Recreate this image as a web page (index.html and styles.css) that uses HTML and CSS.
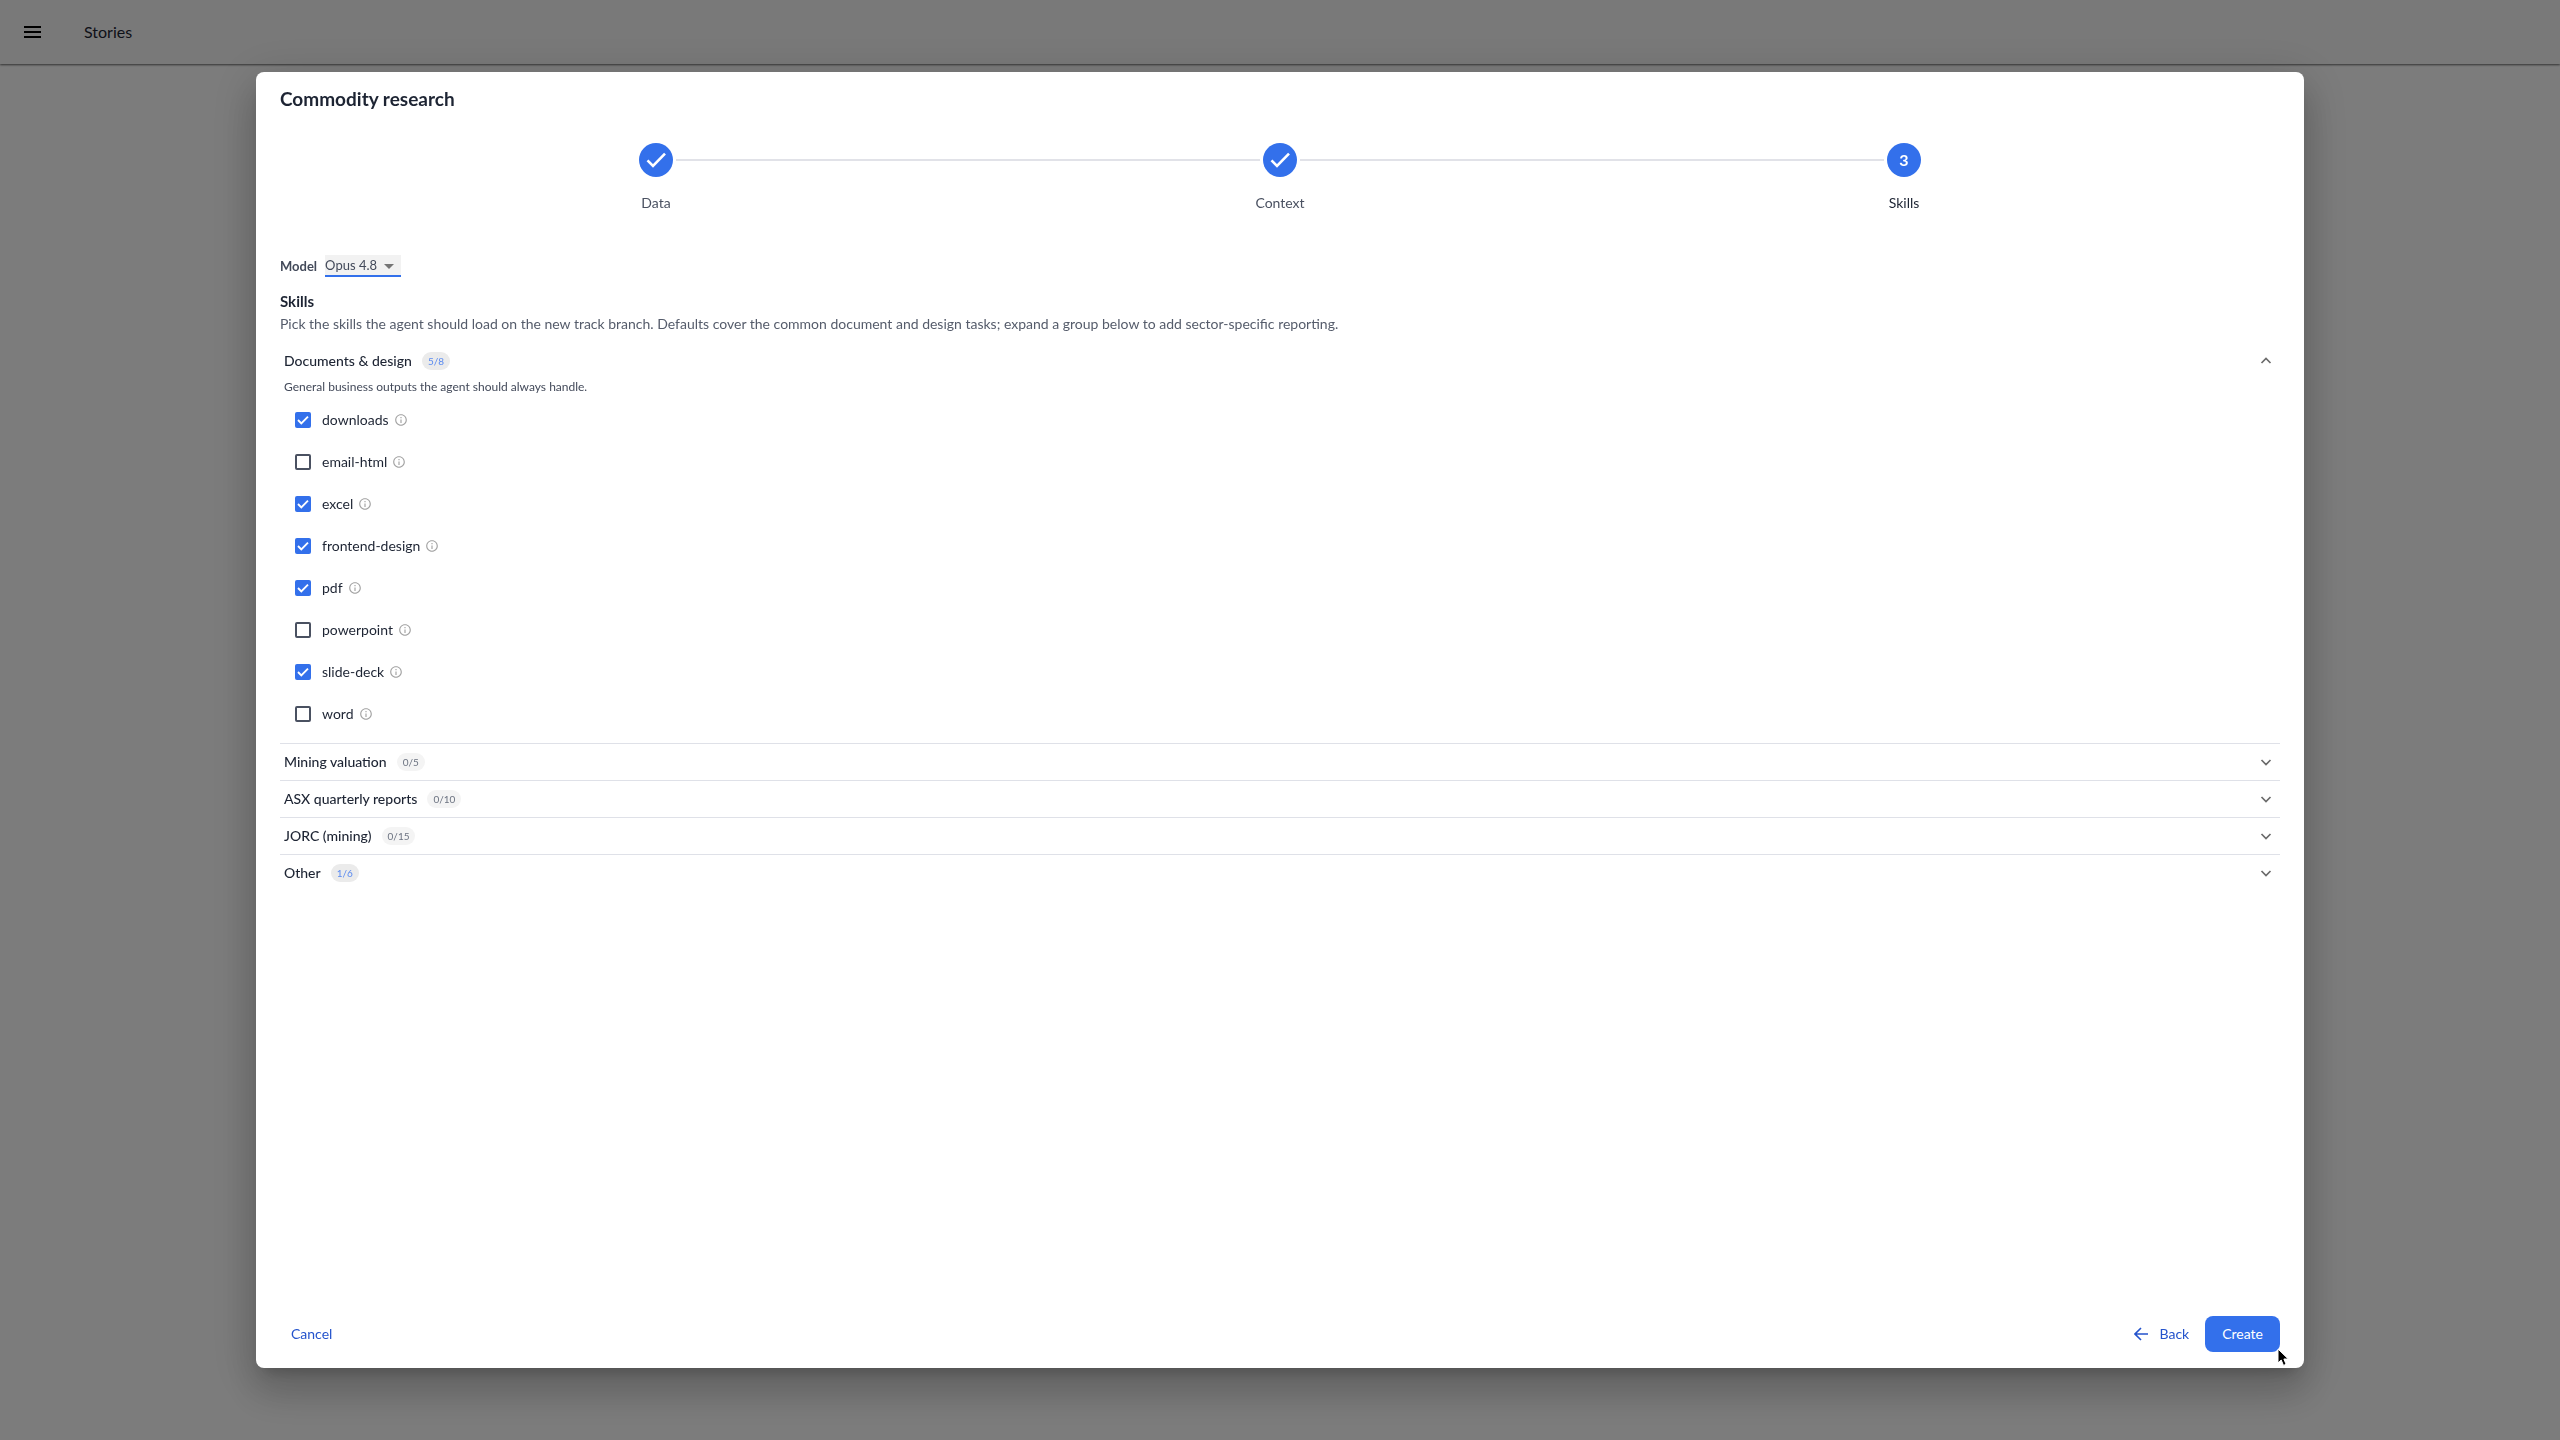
FILE: index.html
```html
<!DOCTYPE html>
<html lang="en">
<head>
	<meta charset="utf-8">
	<title>Stories</title>
	<link rel="stylesheet" href="styles.css">
</head>
<body>

<svg class="defs" width="0" height="0" aria-hidden="true">
	<symbol id="info" viewBox="0 0 24 24">
		<path d="M11 7h2v2h-2zm0 4h2v6h-2zm1-9C6.48 2 2 6.48 2 12s4.48 10 10 10 10-4.48 10-10S17.52 2 12 2zm0 18c-4.41 0-8-3.59-8-8s3.59-8 8-8 8 3.59 8 8-3.59 8-8 8z"/>
	</symbol>
	<symbol id="check" viewBox="0 0 24 24">
		<path d="M3.500 12.300l5.500 5.500L21 5.600" fill="none" stroke="#fff" stroke-width="2.600"/>
	</symbol>
	<symbol id="chevron" viewBox="0 0 12 12">
		<path d="M1.5 4L6 8.5 10.5 4" fill="none" stroke="currentColor" stroke-width="1.7"/>
	</symbol>
</svg>

<header class="topbar">
	<button class="menu" aria-label="Menu">
		<svg width="24" height="24" viewBox="0 0 24 24"><path d="M4 6h17v2H4zM4 11h17v2H4zM4 16h17v2H4z"/></svg>
	</button>
	<span class="topbar-title">Stories</span>
</header>

<div class="overlay">
	<div class="dialog" role="dialog" aria-labelledby="dialog-title">
		<h1 id="dialog-title">Commodity research</h1>

		<ol class="steps">
			<li class="step">
				<div class="step-track">
					<span class="line hidden"></span>
					<span class="dot"><svg width="24" height="24"><use href="#check"/></svg></span>
					<span class="line"></span>
				</div>
				Data
			</li>
			<li class="step">
				<div class="step-track">
					<span class="line"></span>
					<span class="dot"><svg width="24" height="24"><use href="#check"/></svg></span>
					<span class="line"></span>
				</div>
				Context
			</li>
			<li class="step current">
				<div class="step-track">
					<span class="line"></span>
					<span class="dot">3</span>
					<span class="line hidden"></span>
				</div>
				Skills
			</li>
		</ol>

		<div class="model">
			<label for="model">Model</label>
			<div class="select">
				<select id="model"><option>Opus 4.8</option></select>
				<svg class="caret" width="10" height="5" viewBox="0 0 10 5"><path d="M0 0h10L5 5z"/></svg>
			</div>
		</div>

		<h2>Skills</h2>
		<p class="intro">Pick the skills the agent should load on the new track branch. Defaults cover the common document and design tasks; expand a group below to add sector-specific reporting.</p>

		<details class="group" open>
			<summary>Documents &amp; design <span class="count active">5/8</span> <svg class="chevron"><use href="#chevron"/></svg></summary>
			<p class="hint">General business outputs the agent should always handle.</p>
			<ul class="skills">
				<li><label><input type="checkbox" checked> downloads</label> <svg class="info"><use href="#info"/></svg></li>
				<li><label><input type="checkbox"> email-html</label> <svg class="info"><use href="#info"/></svg></li>
				<li><label><input type="checkbox" checked> excel</label> <svg class="info"><use href="#info"/></svg></li>
				<li><label><input type="checkbox" checked> frontend-design</label> <svg class="info"><use href="#info"/></svg></li>
				<li><label><input type="checkbox" checked> pdf</label> <svg class="info"><use href="#info"/></svg></li>
				<li><label><input type="checkbox"> powerpoint</label> <svg class="info"><use href="#info"/></svg></li>
				<li><label><input type="checkbox" checked> slide-deck</label> <svg class="info"><use href="#info"/></svg></li>
				<li><label><input type="checkbox"> word</label> <svg class="info"><use href="#info"/></svg></li>
			</ul>
		</details>
		<details class="group">
			<summary>Mining valuation <span class="count">0/5</span> <svg class="chevron"><use href="#chevron"/></svg></summary>
		</details>
		<details class="group">
			<summary>ASX quarterly reports <span class="count">0/10</span> <svg class="chevron"><use href="#chevron"/></svg></summary>
		</details>
		<details class="group">
			<summary>JORC (mining) <span class="count">0/15</span> <svg class="chevron"><use href="#chevron"/></svg></summary>
		</details>
		<details class="group">
			<summary>Other <span class="count active">1/6</span> <svg class="chevron"><use href="#chevron"/></svg></summary>
		</details>

		<div class="actions">
			<button class="btn cancel">Cancel</button>
			<button class="btn back">
				<svg width="14" height="14" viewBox="0 0 14 14"><path d="M14 7H1.5M7 1L1 7l6 6" fill="none" stroke="currentColor" stroke-width="1.6"/></svg>
				Back
			</button>
			<div class="create-wrap">
				<button class="btn create">Create</button>
				<svg class="cursor" width="14" height="20" viewBox="0 0 14 20"><path d="M1 1v14l3.2-3 2.3 5.4 2.6-1.1L6.9 11h4.4z" fill="#000" stroke="#fff" stroke-width="1"/></svg>
			</div>
		</div>
	</div>
</div>

</body>
</html>
```

FILE: styles.css
```css
* {
	box-sizing: border-box;
}

body {
	margin: 0;
	min-height: 100vh;
	background: #f9f9f9;
	font-family: Lato, "Open Sans", sans-serif;
	font-size: 14px;
	line-height: 20px;
	color: #1d2433;
}

h1, h2, p, ol, ul {
	margin: 0;
	padding: 0;
}

ol, ul {
	list-style: none;
}

button, select, input {
	margin: 0;
	font: inherit;
}

.defs {
	position: absolute;
}

.topbar {
	display: flex;
	align-items: center;
	gap: 32px;
	height: 64px;
	padding: 0 20px;
	background: #f3f3f3;
	box-shadow: 0 1px 2px rgba(0, 0, 0, 0.6);
}

.menu {
	display: flex;
	padding: 0;
	border: 0;
	background: none;
}

.topbar-title {
	padding-left: 8px;
	font-size: 16px;
}

.overlay {
	position: fixed;
	inset: 0;
	display: flex;
	align-items: center;
	justify-content: center;
	background: rgba(0, 0, 0, 0.5);
}

.dialog {
	display: flex;
	flex-direction: column;
	width: 80vw;
	height: 90vh;
	padding: 15px 24px 16px;
	border-radius: 8px;
	background: #fff;
	box-shadow: 0 11px 15px -7px rgba(0, 0, 0, 0.2), 0 24px 38px 3px rgba(0, 0, 0, 0.14), 0 9px 46px 8px rgba(0, 0, 0, 0.12);
}

h1 {
	font-size: 19px;
	line-height: 24px;
}

/* stepper */

.steps {
	display: flex;
	padding: 32px 64px 42px;
}

.step {
	flex: 1;
	text-align: center;
	color: #4a5161;
}

.step.current {
	color: #1d2433;
}

.step-track {
	display: flex;
	align-items: center;
	gap: 3px;
	margin-bottom: 16px;
}

.line {
	flex: 1;
	height: 2px;
	background: #e1e2e8;
}

.line.hidden {
	visibility: hidden;
}

.dot {
	display: flex;
	align-items: center;
	justify-content: center;
	width: 34px;
	height: 34px;
	border-radius: 50%;
	background: #3370eb;
	color: #fff;
	font-size: 16px;
	font-weight: bold;
}

/* model picker */

.model {
	display: flex;
	align-items: center;
	gap: 8px;
	margin-bottom: 14px;
	font-size: 13px;
	font-weight: bold;
	color: #434a5a;
}

.select {
	position: relative;
}

.select select {
	display: block;
	width: 76px;
	height: 22px;
	padding: 0;
	border: 0;
	border-bottom: 2px solid #3370eb;
	border-radius: 0;
	appearance: none;
	background: #f2f2f2;
	font-weight: normal;
	color: #434a5a;
}

.caret {
	position: absolute;
	top: 9px;
	right: 7px;
	fill: #757575;
	pointer-events: none;
}

h2 {
	font-size: 15px;
	line-height: 20px;
}

.intro {
	margin: 3px 0 9px;
	color: #555c6b;
}

/* skill groups */

.group + .group {
	border-top: 1px solid #dfe1e8;
}

summary {
	display: flex;
	align-items: center;
	gap: 10px;
	height: 36px;
	padding: 0 8px 0 4px;
	font-weight: 500;
	list-style: none;
}

.count {
	padding: 0 6px;
	border-radius: 9px;
	background: #f4f4f4;
	font-size: 10px;
	font-weight: normal;
	line-height: 18px;
	color: #6b7280;
}

.count.active {
	background: #ebebeb;
	color: #5b8bf0;
}

.chevron {
	width: 12px;
	height: 12px;
	margin-left: auto;
	color: #6b6b6b;
}

.group[open] .chevron {
	transform: rotate(180deg);
}

.hint {
	padding-left: 4px;
	font-size: 12px;
	line-height: 16px;
	color: #434a5a;
}

.skills {
	padding: 4px 0 8px 15px;
}

.skills li {
	display: flex;
	align-items: center;
	gap: 5px;
	height: 42px;
}

.skills label {
	display: flex;
	align-items: center;
	gap: 11px;
}

.skills input {
	width: 16px;
	height: 16px;
	border: 2px solid #4a5161;
	border-radius: 2px;
	appearance: none;
}

.skills input:checked {
	border: 0;
	background: #3370eb url("data:image/svg+xml,%3Csvg xmlns='http://www.w3.org/2000/svg' viewBox='0 0 16 16'%3E%3Cpath d='M3 8l3.300 3.300L13 4.600' fill='none' stroke='white' stroke-width='1.900'/%3E%3C/svg%3E");
}

.info {
	width: 14px;
	height: 14px;
	fill: #a3a3a3;
}

/* footer */

.actions {
	display: flex;
	align-items: center;
	gap: 16px;
	margin-top: auto;
}

.btn {
	height: 36px;
	border: 0;
	border-radius: 8px;
	background: none;
	color: #2453cc;
}

.cancel {
	margin-right: auto;
	padding: 0 11px;
}

.back {
	display: flex;
	align-items: center;
	gap: 12px;
	padding: 0;
}

.create-wrap {
	position: relative;
}

.create {
	padding: 0 17px;
	background: #3370eb;
	color: #fff;
}

.cursor {
	position: absolute;
	top: 32px;
	left: 72px;
}
```
